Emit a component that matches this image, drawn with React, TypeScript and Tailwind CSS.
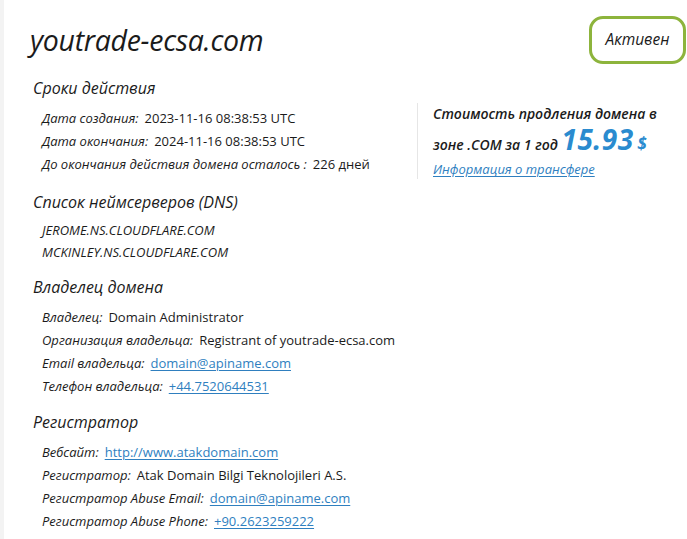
import React from 'react';

type Row = { label: string; value: string; href?: boolean };

const dates: Row[] = [
  { label: 'Дата создания:', value: '2023-11-16 08:38:53 UTC' },
  { label: 'Дата окончания:', value: '2024-11-16 08:38:53 UTC' },
  { label: 'До окончания действия домена осталось :', value: '226 дней' },
];

const owner: Row[] = [
  { label: 'Владелец:', value: 'Domain Administrator' },
  { label: 'Организация владельца:', value: 'Registrant of youtrade-ecsa.com' },
  { label: 'Email владельца:', value: 'domain@apiname.com', href: true },
  { label: 'Телефон владельца:', value: '+44.7520644531', href: true },
];

const registrar: Row[] = [
  { label: 'Вебсайт:', value: 'http://www.atakdomain.com', href: true },
  { label: 'Регистратор:', value: 'Atak Domain Bilgi Teknolojileri A.S.' },
  { label: 'Регистратор Abuse Email:', value: 'domain@apiname.com', href: true },
  { label: 'Регистратор Abuse Phone:', value: '+90.2623259222', href: true },
];

function Rows({ rows }: { rows: Row[] }) {
  return (
    <ul className="pl-[12px] mt-[7px]">
      {rows.map((r) => (
        <li key={r.label} className="leading-[23px] text-[13px] whitespace-nowrap">
          <span className="italic">{r.label}</span>
          {r.href ? (
            <a href="#" className="ml-[6px] text-[#2f7fbf] underline underline-offset-2">
              {r.value}
            </a>
          ) : (
            <span className="ml-[6px]">{r.value}</span>
          )}
        </li>
      ))}
    </ul>
  );
}

function Heading({ children }: { children: React.ReactNode }) {
  return <h2 className="italic text-[16px] leading-[24px] pl-[3px]">{children}</h2>;
}

export default function App() {
  return (
    <div className="min-h-screen bg-[#f3f3f3] pl-[4px] font-['Open_Sans',sans-serif] text-[#1b1b1b]">
      <div className="min-h-screen bg-white pl-[26px] pb-4">
        <header className="flex items-start justify-between pt-[16px] pr-[1px]">
          <h1 className="italic font-medium text-[28.5px] leading-[48px] tracking-[-0.3px]">youtrade-ecsa.com</h1>
          <div className="h-[48px] w-[97px] border-[3px] border-[#8db43c] rounded-[14px] flex items-center justify-center italic text-[15.5px]">
            Активен
          </div>
        </header>

        <section className="flex mt-[12px]">
          <div className="w-[387px]">
            <Heading>Сроки действия</Heading>
            <Rows rows={dates} />
          </div>
          <aside className="mt-[27px] self-start border-l border-[#e6e6e6] pl-[15px] w-[260px]">
            <p className="italic font-semibold text-[14px] leading-[22px]">Стоимость продления домена в</p>
            <p className="italic font-semibold text-[14px] leading-[28px] whitespace-nowrap">
              зоне .COM за 1 год{' '}
              <span className="text-[28px] font-bold text-[#2a8bcf] tracking-[0.5px]">15.93</span>{' '}
              <span className="text-[17px] font-bold text-[#2a8bcf]">$</span>
            </p>
            <a href="#" className="block italic text-[13px] leading-[20px] text-[#2f7fbf] underline underline-offset-2">
              Информация о трансфере
            </a>
          </aside>
        </section>

        <section className="mt-[11px]">
          <Heading>Список неймсерверов (DNS)</Heading>
          <ul className="pl-[12px] mt-[4.5px]">
            <li className="italic text-[13px] leading-[22px]">JEROME.NS.CLOUDFLARE.COM</li>
            <li className="italic text-[13px] leading-[22px]">MCKINLEY.NS.CLOUDFLARE.COM</li>
          </ul>
        </section>

        <section className="mt-[12.5px]">
          <Heading>Владелец домена</Heading>
          <Rows rows={owner} />
        </section>

        <section className="mt-[11.5px]">
          <Heading>Регистратор</Heading>
          <Rows rows={registrar} />
        </section>
      </div>
    </div>
  );
}
